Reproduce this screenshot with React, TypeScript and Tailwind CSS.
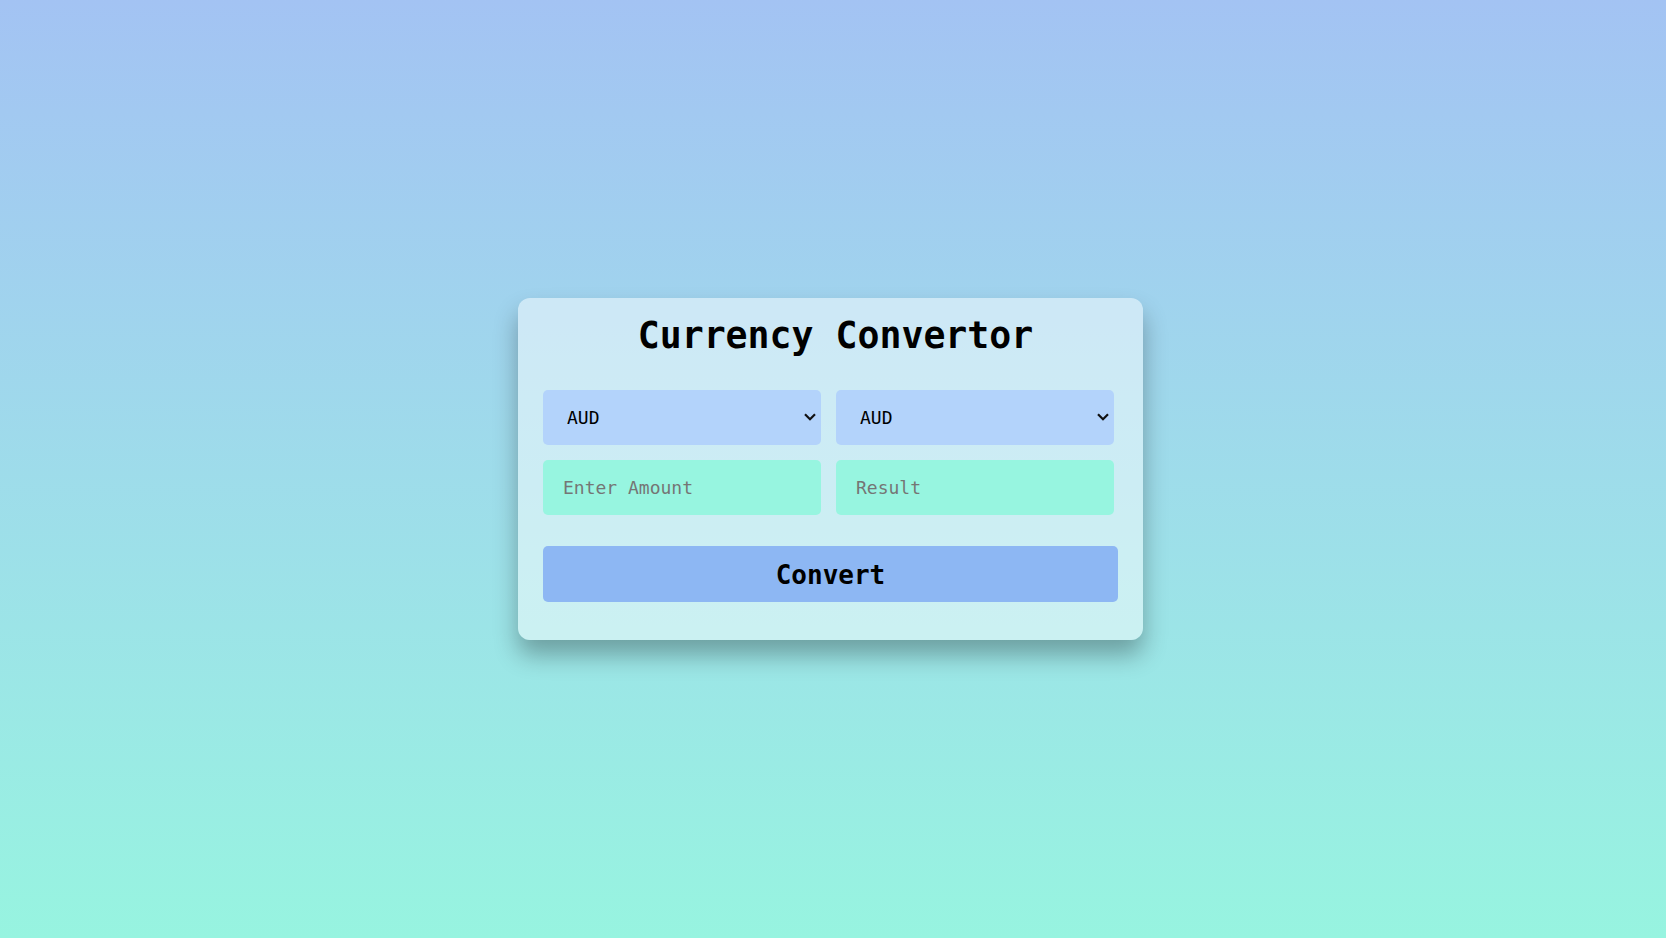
import { useState } from "react";

const currencies = ["AUD", "USD", "EUR", "GBP", "INR", "JPY", "CAD"];

function CurrencySelect({ value, onChange }: { value: string; onChange: (v: string) => void }) {
  return (
    <div className="relative">
      <select
        value={value}
        onChange={(e) => onChange(e.target.value)}
        className="h-[55px] w-full appearance-none rounded-[5px] bg-[#b3d3fb] pl-[24px] text-[18px] text-black outline-none"
      >
        {currencies.map((c) => <option key={c}>{c}</option>)}
      </select>
      {/* chevron */}
      <svg
        className="pointer-events-none absolute top-[23px] right-[5px]"
        width="12"
        height="8"
        viewBox="0 0 12 8"
        fill="none"
      >
        <path d="M1 1.2L6 6.2L11 1.2" stroke="#111" strokeWidth="2.2" />
      </svg>
    </div>
  );
}

export default function App() {
  const [from, setFrom] = useState("AUD");
  const [to, setTo] = useState("AUD");
  const [amount, setAmount] = useState("");
  const [result, setResult] = useState("");

  return (
    <div className="flex min-h-screen items-center justify-center bg-gradient-to-b from-[#a3c3f3] to-[#97f4e0] pr-[5px] font-['DejaVu_Sans_Mono',monospace]">
      <div className="w-[625px] rounded-xl bg-white/[0.48] px-[25px] pt-[17px] pb-[38px] shadow-[0_15px_25px_rgba(0,0,0,0.3)]">
        <h1 className="pl-[10px] text-center text-[36.5px] font-bold leading-[42px] text-black">Currency Convertor</h1>

        <div className="mt-[33px] grid grid-cols-[278px_278px] gap-[15px]">
          <CurrencySelect value={from} onChange={setFrom} />
          <CurrencySelect value={to} onChange={setTo} />
          <input
            value={amount}
            onChange={(e) => setAmount(e.target.value)}
            placeholder="Enter Amount"
            className="h-[55px] rounded-[5px] bg-[#97f5e0] px-5 text-[18px] text-black outline-none placeholder:text-[#757575]"
          />
          <input
            value={result}
            readOnly
            placeholder="Result"
            className="h-[55px] rounded-[5px] bg-[#97f5e0] px-5 text-[18px] text-black outline-none placeholder:text-[#757575]"
          />
        </div>

        <button
          onClick={() => setResult(amount)}
          className="mt-[31px] h-[56px] w-full rounded-[5px] bg-[#8db7f3] pt-[3px] text-[26px] font-bold text-black"
        >
          Convert
        </button>
      </div>
    </div>
  );
}
